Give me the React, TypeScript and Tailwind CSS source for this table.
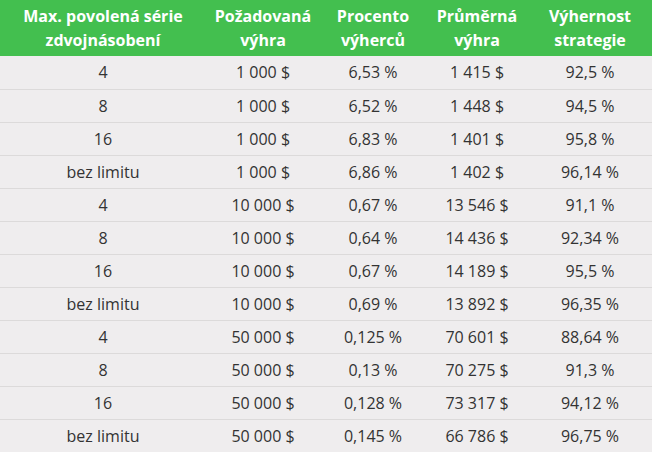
const rows: [string, string, string, string, string][] = [
  ["4", "1 000 $", "6,53 %", "1 415 $", "92,5 %"],
  ["8", "1 000 $", "6,52 %", "1 448 $", "94,5 %"],
  ["16", "1 000 $", "6,83 %", "1 401 $", "95,8 %"],
  ["bez limitu", "1 000 $", "6,86 %", "1 402 $", "96,14 %"],
  ["4", "10 000 $", "0,67 %", "13 546 $", "91,1 %"],
  ["8", "10 000 $", "0,64 %", "14 436 $", "92,34 %"],
  ["16", "10 000 $", "0,67 %", "14 189 $", "95,5 %"],
  ["bez limitu", "10 000 $", "0,69 %", "13 892 $", "96,35 %"],
  ["4", "50 000 $", "0,125 %", "70 601 $", "88,64 %"],
  ["8", "50 000 $", "0,13 %", "70 275 $", "91,3 %"],
  ["16", "50 000 $", "0,128 %", "73 317 $", "94,12 %"],
  ["bez limitu", "50 000 $", "0,145 %", "66 786 $", "96,75 %"],
];

const headers: [string, string][] = [
  ["Max. povolená série", "zdvojnásobení"],
  ["Požadovaná", "výhra"],
  ["Procento", "výherců"],
  ["Průměrná", "výhra"],
  ["Výhernost", "strategie"],
];

export default function App() {
  return (
    <div className="w-[652px] h-[452px] overflow-hidden bg-[#efedee] font-['Open_Sans',sans-serif]">
      <table className="w-full table-fixed border-collapse">
        <colgroup>
          <col className="w-[206px]" />
          <col className="w-[114px]" />
          <col className="w-[106px]" />
          <col className="w-[102px]" />
          <col className="w-[124px]" />
        </colgroup>
        <thead>
          <tr className="h-[56px] bg-[#43bf4f]">
            {headers.map(([a, b]) => (
              <th key={a} className="p-0 text-center text-[16px] font-bold leading-6 text-white">
                {a}
                <br />
                {b}
              </th>
            ))}
          </tr>
        </thead>
        <tbody>
          {rows.map((r, i) => (
            <tr key={i} className="h-[33px] border-b border-[#dcdada] last:border-b-0">
              {r.map((c, j) => (
                <td key={j} className="p-0 text-center text-[16px] text-[#333333]">
                  {c}
                </td>
              ))}
            </tr>
          ))}
        </tbody>
      </table>
    </div>
  );
}
